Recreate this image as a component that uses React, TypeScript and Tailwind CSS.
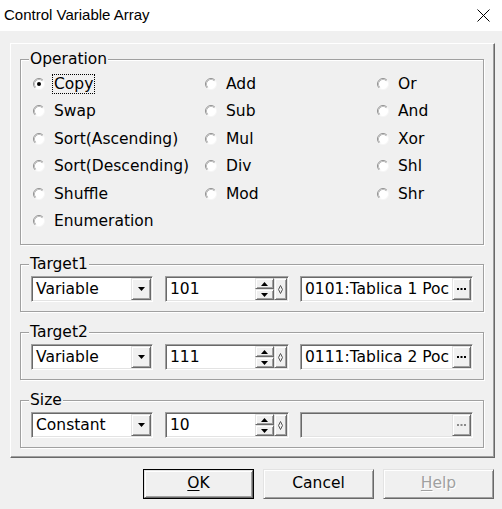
import React from 'react';

// classic 3D frames
const raised =
  'border border-t-[#e3e3e3] border-l-[#e3e3e3] border-r-[#696969] border-b-[#696969] shadow-[inset_1px_1px_0_#fff,inset_-1px_-1px_0_#a0a0a0] bg-[#f0f0f0]';
const sunken =
  'border border-t-[#a0a0a0] border-l-[#a0a0a0] border-r-white border-b-white shadow-[inset_1px_1px_0_#696969,inset_-1px_-1px_0_#e3e3e3] p-px';

function Radio({ label, checked = false, focused = false }: { label: string; checked?: boolean; focused?: boolean }) {
  return (
    <div className="h-[27.5px] flex items-center">
      <svg width="12" height="12" viewBox="0 0 12 12" className="shrink-0">
        <circle cx="6" cy="6" r="5.5" fill="#fff" stroke="#f6f6f6" />
        <path d="M2.11 9.89 A5.5 5.5 0 0 1 9.89 2.11" fill="none" stroke="#8f8f8f" />
        <path d="M2.82 9.18 A4.5 4.5 0 0 1 9.18 2.82" fill="none" stroke="#bdbdbd" />
        {checked && <circle cx="6" cy="6" r="2" fill="#000" />}
      </svg>
      <span
        className={`ml-[7px] px-px leading-[18px] border ${focused ? 'border-dotted border-black' : 'border-transparent'}`}
      >
        {label}
      </span>
    </div>
  );
}

function Group({ title, className = '', children }: { title: string; className?: string; children: React.ReactNode }) {
  return (
    <fieldset
      className={`w-[464px] border border-[#a0a0a0] shadow-[inset_1px_1px_0_#fff,1px_1px_0_#fff] p-0 m-0 ${className}`}
    >
      <legend className="ml-[8px] px-px leading-[18px] bg-[#f0f0f0]">{title}</legend>
      {children}
    </fieldset>
  );
}

function DownArrow() {
  return (
    <svg width="7" height="4" viewBox="0 0 7 4">
      <path d="M0 0 H7 L3.5 4 Z" fill="#000" />
    </svg>
  );
}

function Combo({ value }: { value: string }) {
  return (
    <div className={`${sunken} w-[122px] h-[26px] bg-white flex`}>
      <span className="flex-1 pl-[3px] leading-[22px]">{value}</span>
      <div className={`${raised} w-[20px] h-full flex items-center justify-center`}>
        <DownArrow />
      </div>
    </div>
  );
}

function SpinEdit({ value }: { value: string }) {
  return (
    <div className={`${sunken} ml-[12px] w-[124px] h-[26px] bg-white flex`}>
      <span className="flex-1 pl-[3px] leading-[22px]">{value}</span>
      <div className="w-[19px] h-full flex flex-col">
        <div className={`${raised} flex-1 flex items-center justify-center`}>
          <svg width="7" height="4" viewBox="0 0 7 4">
            <path d="M0 4 H7 L3.5 0 Z" fill="#000" />
          </svg>
        </div>
        <div className={`${raised} flex-1 flex items-center justify-center`}>
          <DownArrow />
        </div>
      </div>
      <div className={`${raised} w-[13px] h-full flex items-center justify-center`}>
        <svg width="5" height="9" viewBox="0 0 5 9">
          <path d="M2.5 0.5 L4.5 4.5 L2.5 8.5 L0.5 4.5 Z" fill="none" stroke="#555" />
        </svg>
      </div>
    </div>
  );
}

function RefField({ value, disabled = false }: { value?: string; disabled?: boolean }) {
  const dot = disabled ? '#8a8a8a' : '#000';
  return (
    <div className={`${sunken} ml-[11px] w-[173px] h-[26px] flex ${disabled ? 'bg-[#f0f0f0]' : 'bg-white'}`}>
      <span className="flex-1 pl-[3px] leading-[22px] whitespace-nowrap overflow-hidden">{value}</span>
      <div className={`${raised} w-[19px] h-full flex items-center justify-center`}>
        <svg width="9" height="3" viewBox="0 0 9 3">
          <rect x="0" y="0" width="2" height="2" fill={dot} />
          <rect x="3.5" y="0" width="2" height="2" fill={dot} />
          <rect x="7" y="0" width="2" height="2" fill={dot} />
        </svg>
      </div>
    </div>
  );
}

function Target({ title, mode, num, ref, disabled, className }: {
  title: string; mode: string; num: string; ref?: string; disabled?: boolean; className?: string;
}) {
  return (
    <Group title={title} className={className}>
      <div className="flex pl-[10px] pt-[3px] pb-[9px]">
        <Combo value={mode} />
        <SpinEdit value={num} />
        <RefField value={ref} disabled={disabled} />
      </div>
    </Group>
  );
}

function DialogButton({ children, isDefault = false }: { children: React.ReactNode; isDefault?: boolean }) {
  return (
    <div className={`w-[111px] h-[30px] ${isDefault ? 'border border-black' : ''}`}>
      <div className={`${raised} w-full h-full flex items-center justify-center`}>{children}</div>
    </div>
  );
}

export default function App() {
  return (
    <div className="w-[502px] h-[509px] bg-[#f0f0f0] text-black text-[15.5px] overflow-hidden font-['DejaVu_Sans',Verdana,sans-serif]">
      <div className="h-[31px] bg-white flex items-center justify-between pl-[4px] pr-[12px]">
        <span className="text-[15px] font-['Liberation_Sans',Arial,sans-serif]">Control Variable Array</span>
        <svg width="13" height="13" viewBox="0 0 13 13">
          <path d="M0.5 0.5 L12.5 12.5 M12.5 0.5 L0.5 12.5" stroke="#000" strokeWidth="1" />
        </svg>
      </div>

      <div className="ml-[10px] mt-[12px] w-[485px] h-[415px] border border-t-white border-l-white border-r-[#696969] border-b-[#696969] shadow-[inset_-1px_-1px_0_#a0a0a0] pl-[9px] pt-[6px]">
        <Group title="Operation">
          <div className="flex pl-[12px] pt-[2px] pb-[9px]">
            <div className="w-[172px] flex flex-col">
              <Radio label="Copy" checked focused />
              <Radio label="Swap" />
              <Radio label="Sort(Ascending)" />
              <Radio label="Sort(Descending)" />
              <Radio label="Shuffle" />
              <Radio label="Enumeration" />
            </div>
            <div className="w-[172px] flex flex-col">
              <Radio label="Add" />
              <Radio label="Sub" />
              <Radio label="Mul" />
              <Radio label="Div" />
              <Radio label="Mod" />
            </div>
            <div className="flex flex-col">
              <Radio label="Or" />
              <Radio label="And" />
              <Radio label="Xor" />
              <Radio label="Shl" />
              <Radio label="Shr" />
            </div>
          </div>
        </Group>

        <Target title="Target1" mode="Variable" num="101" ref="0101:Tablica 1 Poc" className="mt-[10px]" />
        <Target title="Target2" mode="Variable" num="111" ref="0111:Tablica 2 Poc" className="mt-[11px]" />
        <Target title="Size" mode="Constant" num="10" disabled className="mt-[11px]" />
      </div>

      <div className="mt-[11px] pr-[8px] flex justify-end gap-[9px]">
        <DialogButton isDefault>
          <span><span className="underline underline-offset-2">O</span>K</span>
        </DialogButton>
        <DialogButton>Cancel</DialogButton>
        <DialogButton>
          <span className="text-[#a0a0a0] [text-shadow:1px_1px_0_#fff]">
            <span className="underline underline-offset-2">H</span>elp
          </span>
        </DialogButton>
      </div>
    </div>
  );
}
